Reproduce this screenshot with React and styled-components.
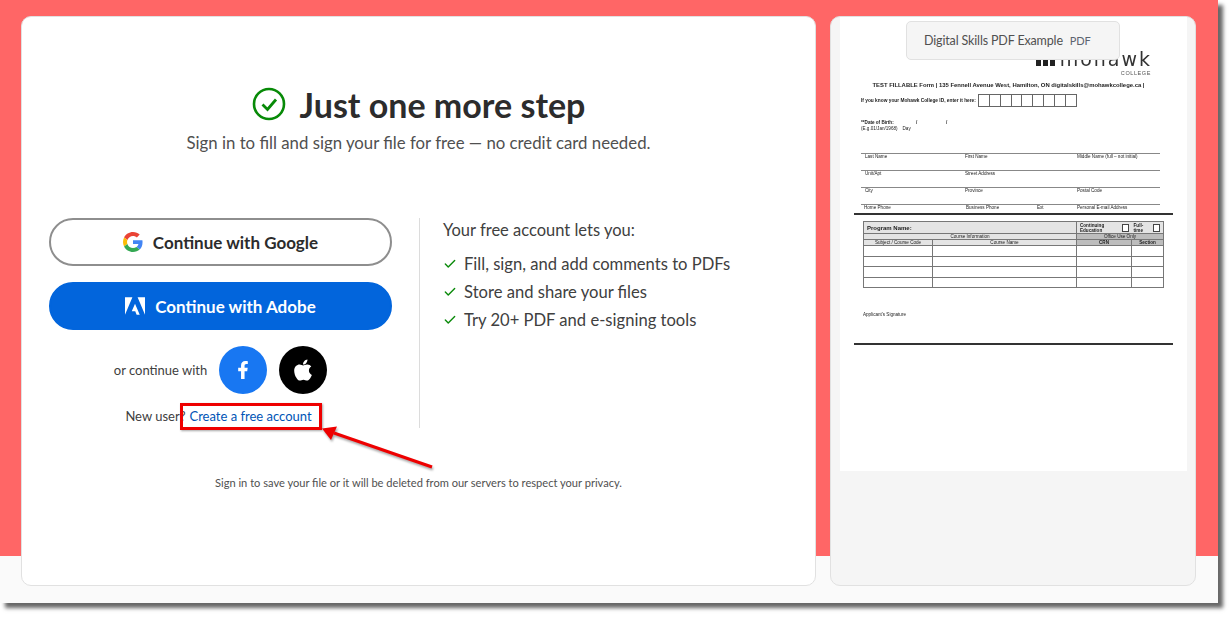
import React from "react";
import styled, { createGlobalStyle } from "styled-components";
import { Check } from "lucide-react";
import { FaApple, FaFacebookF } from "react-icons/fa";
import { SiAdobe } from "react-icons/si";

const GlobalStyle = createGlobalStyle`
  html, body {
    margin: 0;
    background: #fff;
    font-family: "Lato", "Noto Sans", sans-serif;
  }
`;

const Screen = styled.div`
  height: 618px;
`;

const Frame = styled.div`
  position: relative;
  box-sizing: border-box;
  width: 1218px;
  height: 603px;
  display: flex;
  gap: 14px;
  padding: 16px 22px 17px 21px;
  background: linear-gradient(#ff6666 556px, #fafafa 556px);
  box-shadow: 5px 5px 4px rgba(0, 0, 0, 0.6);
`;

const SignInCard = styled.main`
  box-sizing: border-box;
  width: 795px;
  display: flex;
  flex-direction: column;
  align-items: center;
  padding: 66px 27px 0;
  background: #fff;
  border: 1px solid #e1e1e1;
  border-radius: 10px;
`;

const TitleRow = styled.div`
  display: flex;
  align-items: center;
  gap: 14px;
  height: 42px;
`;

const Title = styled.h1`
  margin: 0;
  font-size: 34px;
  font-weight: 700;
  color: #2c2c2c;
`;

const Subtitle = styled.p`
  margin: 6px 0 0;
  font-size: 16.8px;
  line-height: 24px;
  color: #505050;
`;

const Columns = styled.div`
  align-self: stretch;
  display: flex;
  height: 210px;
  margin-top: 63px;
`;

const ButtonColumn = styled.div`
  width: 343px;
  display: flex;
  flex-direction: column;
  align-items: center;
  gap: 16px;
  padding-right: 27px;
  border-right: 1px solid #dcdcdc;
`;

const AuthButton = styled.button`
  box-sizing: border-box;
  width: 343px;
  height: 48px;
  display: flex;
  align-items: center;
  justify-content: center;
  gap: 10px;
  padding: 0;
  border: 2px solid ${(props) => (props.$primary ? "#0265dc" : "#8e8e8e")};
  border-radius: 24px;
  background: ${(props) => (props.$primary ? "#0265dc" : "#fff")};
  color: ${(props) => (props.$primary ? "#fff" : "#2c2c2c")};
  font-family: inherit;
  font-size: 17px;
  font-weight: 700;
`;

const SocialRow = styled.div`
  display: flex;
  align-items: center;
  gap: 12px;
  font-size: 13px;
  color: #404040;
`;

const SocialButton = styled.button`
  width: 48px;
  height: 48px;
  display: flex;
  align-items: center;
  justify-content: center;
  padding: 0;
  border: 0;
  border-radius: 50%;
  background: ${(props) => props.$bg};
  color: #fff;
`;

const NewUser = styled.p`
  margin: -4px 0 0;
  padding-right: 4px;
  font-size: 13px;
  line-height: 20px;
  color: #404040;
`;

const AccountLink = styled.a`
  margin-left: 4px;
  color: #0054b6;
`;

const Benefits = styled.section`
  padding: 1px 0 0 23px;
  color: #404040;
`;

const BenefitsTitle = styled.h2`
  margin: 0 0 12px;
  font-size: 16.5px;
  line-height: 22px;
  font-weight: 400;
`;

const BenefitList = styled.ul`
  margin: 0;
  padding: 0;
  list-style: none;
  display: flex;
  flex-direction: column;
  gap: 6px;
`;

const Benefit = styled.li`
  display: flex;
  align-items: center;
  gap: 7px;
  font-size: 16.6px;
  line-height: 22px;
`;

const Privacy = styled.p`
  margin: 45px 0 0;
  font-size: 11.1px;
  line-height: 20px;
  color: #505050;
`;

const PreviewCard = styled.aside`
  box-sizing: border-box;
  width: 366px;
  padding: 0 8px 0 9px;
  background: #f5f5f5;
  border: 1px solid #e1e1e1;
  border-radius: 10px;
`;

const PaperPage = styled.div`
  box-sizing: border-box;
  height: 454px;
  padding: 32px 14px 0;
  background: #fff;
  color: #222;
  font-family: "Liberation Sans", sans-serif;
  font-size: 4.6px;
  filter: blur(0.25px);
`;

const Logo = styled.div`
  display: flex;
  justify-content: flex-end;
  align-items: flex-end;
  gap: 5px;
  height: 17px;
  padding-right: 21px;
  font-family: "DejaVu Sans", sans-serif;
  font-size: 19px;
  line-height: 14px;
  letter-spacing: 2px;
  color: #333;
`;

const LogoBars = styled.span`
  width: 19px;
  height: 11px;
  background: repeating-linear-gradient(90deg, #222 0 5px, transparent 5px 7px);
`;

const LogoSub = styled.div`
  margin-top: 3px;
  padding-right: 22px;
  text-align: right;
  font-size: 5.5px;
  line-height: 9px;
  letter-spacing: 0.6px;
  color: #555;
`;

const FormTitle = styled.div`
  margin-top: 2px;
  padding-right: 10px;
  text-align: center;
  font-size: 5.9px;
  line-height: 10px;
  font-weight: 700;
`;

const IdRow = styled.div`
  display: flex;
  align-items: center;
  gap: 2px;
  margin: 4px 0 0 7px;
  font-size: 4.8px;
  font-weight: 700;
`;

const IdBoxes = styled.div`
  display: flex;
  height: 13px;
  border-left: 1px solid #666;
`;

const IdBox = styled.span`
  box-sizing: border-box;
  width: 10.9px;
  border: 1px solid #666;
  border-left: 0;
`;

const BirthBlock = styled.div`
  margin: 13px 0 0 7px;
  line-height: 6px;
`;

const BirthDate = styled.div`
  display: grid;
  grid-template-columns: 55px 30px 1fr;
  font-weight: 700;
`;

const BirthHint = styled.div`
  display: flex;
  gap: 5px;
`;

const FieldList = styled.div`
  margin: 21px 13px 0 7px;
`;

const FieldRow = styled.div`
  display: grid;
  grid-template-columns: ${(props) => props.$columns};
  height: 16px;
  padding-left: ${(props) => props.$inset}px;
  border-top: 1px solid #888;
  line-height: 6px;
  &:last-child {
    height: 8px;
  }
`;

const HeavyRule = styled.div`
  height: 2px;
  background: #333;
`;

const CourseTable = styled.table`
  width: 300px;
  margin: 6px 0 0 9px;
  border-collapse: collapse;
  table-layout: fixed;
  text-align: center;
  font-weight: 700;
  td {
    padding: 0;
    border: 1px solid #777;
  }
`;

const TallCell = styled.td`
  height: 9.5px;
  background: #fff;
`;

const BandCell = styled.td`
  height: 5px;
  line-height: 5px;
  background: ${(props) => props.$bg || "#e4e4e4"};
  font-weight: ${(props) => props.$weight || 700};
`;

const ProgramName = styled.td`
  padding-left: 3px !important;
  height: 11px;
  background: #e4e4e4;
  text-align: left;
  font-size: 6px;
`;

const ProgramKind = styled.td`
  background: #e4e4e4;
`;

const KindLayout = styled.div`
  display: flex;
  align-items: center;
  gap: 5px;
  padding: 0 3px;
  text-align: left;
  line-height: 5px;
`;

const KindBox = styled.span`
  width: 6px;
  height: 6px;
  border: 1px solid #444;
  background: #fff;
`;

const Signature = styled.div`
  margin: 24px 0 25px 9px;
  line-height: 6px;
`;

const FileChip = styled.div`
  position: absolute;
  left: 906px;
  top: 21px;
  box-sizing: border-box;
  width: 214px;
  height: 39px;
  display: flex;
  align-items: center;
  gap: 7px;
  padding-left: 17px;
  background: #f5f5f5;
  border: 1px solid #e1e1e1;
  border-radius: 5px;
  font-size: 12.5px;
  letter-spacing: -0.15px;
  color: #505050;
`;

const ChipType = styled.span`
  font-size: 11px;
  color: #5c6470;
`;

const CalloutBox = styled.div`
  position: absolute;
  left: 180px;
  top: 403px;
  box-sizing: border-box;
  width: 142px;
  height: 27px;
  border: 3px solid #ee0000;
  box-shadow: 1px 1px 2px rgba(0, 0, 0, 0.35);
`;

const CalloutArrow = styled.svg`
  position: absolute;
  left: 316px;
  top: 420px;
  filter: drop-shadow(1px 2px 1px rgba(0, 0, 0, 0.35));
`;

const TitleCheck = () => (
  <svg width="34" height="34" viewBox="0 0 34 34" fill="none" stroke="#078a07" strokeWidth="2.6">
    <circle cx="17" cy="17" r="15" />
    <path d="M10.5 17.5l5 5 8.5-10" strokeWidth="2.8" />
  </svg>
);

const GoogleMark = () => (
  <svg width="20" height="20" viewBox="0 0 48 48">
    <path fill="#ea4335" d="M24 9.5c3.5 0 6.7 1.2 9.2 3.6l6.9-6.9C35.9 2.400 30.500 0 24 0 14.600 0 6.500 5.400 2.600 13.200l8 6.200C12.500 13.700 17.800 9.500 24 9.500z" />
    <path fill="#4285f4" d="M46.900 24.500c0-1.600-.1-3.100-.4-4.500H24v9h12.900c-.6 3-2.200 5.500-4.700 7.200l7.700 6c4.500-4.200 7-10.300 7-17.700z" />
    <path fill="#fbbc05" d="M10.500 28.600c-.5-1.400-.8-3-.8-4.600s.3-3.200.8-4.600l-8-6.200C.9 16.500 0 20.100 0 24s.9 7.500 2.600 10.800l7.900-6.200z" />
    <path fill="#34a853" d="M24 48c6.500 0 11.900-2.100 15.900-5.800l-7.700-6c-2.200 1.400-4.900 2.300-8.200 2.300-6.200 0-11.500-4.200-13.400-9.900l-8 6.200C6.500 42.600 14.600 48 24 48z" />
  </svg>
);

const benefits = [
  "Fill, sign, and add comments to PDFs",
  "Store and share your files",
  "Try 20+ PDF and e-signing tools",
];

const fieldRows = [
  { columns: "100px 112px 1fr", inset: 4, labels: ["Last Name", "First Name", "Middle Name (full – not initial)"] },
  { columns: "100px 112px 1fr", inset: 4, labels: ["Unit/Apt", "Street Address", ""] },
  { columns: "100px 112px 1fr", inset: 4, labels: ["City", "Province", "Postal Code"] },
  { columns: "102px 71px 40px 1fr", inset: 3, labels: ["Home Phone", "Business Phone", "Ext", "Personal E-mail Address"] },
];

const App = () => (
  <Screen>
    <GlobalStyle />
    <Frame>
      <SignInCard>
        <TitleRow>
          <TitleCheck />
          <Title>Just one more step</Title>
        </TitleRow>
        <Subtitle>Sign in to fill and sign your file for free — no credit card needed.</Subtitle>
        <Columns>
          <ButtonColumn>
            <AuthButton>
              <GoogleMark />
              Continue with Google
            </AuthButton>
            <AuthButton $primary>
              <SiAdobe size={20} />
              Continue with Adobe
            </AuthButton>
            <SocialRow>
              <span>or continue with</span>
              <SocialButton $bg="#1877f2">
                <FaFacebookF size={18} />
              </SocialButton>
              <SocialButton $bg="#000">
                <FaApple size={24} />
              </SocialButton>
            </SocialRow>
            <NewUser>
              New user?
              <AccountLink>Create a free account</AccountLink>
            </NewUser>
          </ButtonColumn>
          <Benefits>
            <BenefitsTitle>Your free account lets you:</BenefitsTitle>
            <BenefitList>
              {benefits.map((text) => (
                <Benefit key={text}>
                  <Check size={14} color="#0a8a0a" strokeWidth={2.4} />
                  {text}
                </Benefit>
              ))}
            </BenefitList>
          </Benefits>
        </Columns>
        <Privacy>Sign in to save your file or it will be deleted from our servers to respect your privacy.</Privacy>
      </SignInCard>

      <PreviewCard>
        <PaperPage>
          <Logo>
            <LogoBars />
            mohawk
          </Logo>
          <LogoSub>COLLEGE</LogoSub>
          <FormTitle>TEST FILLABLE Form | 135 Fennell Avenue West, Hamilton, ON digitalskills@mohawkcollege.ca |</FormTitle>
          <IdRow>
            If you know your Mohawk College ID, enter it here:
            <IdBoxes>
              {Array.from({ length: 9 }, (_, i) => (
                <IdBox key={i} />
              ))}
            </IdBoxes>
          </IdRow>
          <BirthBlock>
            <BirthDate>
              <span>**Date of Birth:</span>
              <span>/</span>
              <span>/</span>
            </BirthDate>
            <BirthHint>
              <span>(E.g.01/Jan/1968)</span>
              <span>Day</span>
            </BirthHint>
          </BirthBlock>
          <FieldList>
            {fieldRows.map((row) => (
              <FieldRow key={row.labels[0]} $columns={row.columns} $inset={row.inset}>
                {row.labels.map((label, i) => (
                  <span key={i}>{label}</span>
                ))}
              </FieldRow>
            ))}
          </FieldList>
          <HeavyRule />
          <CourseTable>
            <colgroup>
              <col width="69" />
              <col width="144" />
              <col width="55" />
              <col width="32" />
            </colgroup>
            <tbody>
              <tr>
                <ProgramName colSpan={2}>Program Name:</ProgramName>
                <ProgramKind colSpan={2}>
                  <KindLayout>
                    <span>Continuing Education</span>
                    <KindBox />
                    <span>Full-time</span>
                    <KindBox />
                  </KindLayout>
                </ProgramKind>
              </tr>
              <tr>
                <BandCell colSpan={2} $weight={400}>Course Information</BandCell>
                <BandCell colSpan={2} $bg="#bdbdbd" $weight={400}>Office Use Only</BandCell>
              </tr>
              <tr>
                <BandCell $weight={400}>Subject / Course Code</BandCell>
                <BandCell $weight={400}>Course Name</BandCell>
                <BandCell $bg="#bdbdbd">CRN</BandCell>
                <BandCell $bg="#bdbdbd">Section</BandCell>
              </tr>
              {[0, 1, 2, 3].map((row) => (
                <tr key={row}>
                  <TallCell />
                  <TallCell />
                  <TallCell />
                  <TallCell />
                </tr>
              ))}
            </tbody>
          </CourseTable>
          <Signature>Applicant's Signature</Signature>
          <HeavyRule />
        </PaperPage>
      </PreviewCard>

      <FileChip>
        Digital Skills PDF Example
        <ChipType>PDF</ChipType>
      </FileChip>
      <CalloutBox />
      <CalloutArrow width="120" height="50" viewBox="0 0 120 50">
        <path d="M116 47L18 13" stroke="#ee0000" strokeWidth="3" fill="none" />
        <path d="M6 8.500L21 6.500L15 20z" fill="#ee0000" />
      </CalloutArrow>
    </Frame>
  </Screen>
);

export default App;
